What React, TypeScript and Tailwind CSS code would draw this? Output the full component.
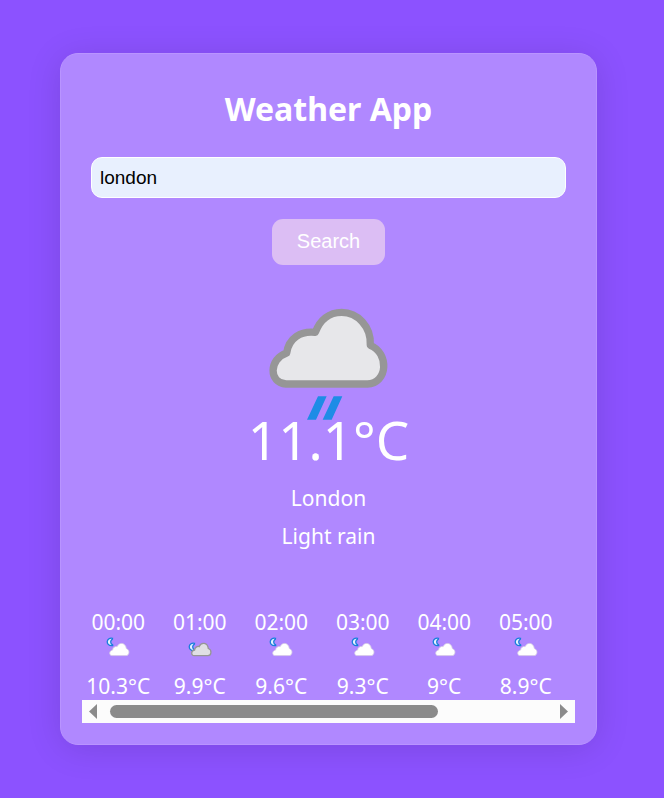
type Hour = { time: string; temp: string; sky: "partly" | "cloudy" };

const hours: Hour[] = [
  { time: "00:00", temp: "10.3°C", sky: "partly" },
  { time: "01:00", temp: "9.9°C", sky: "cloudy" },
  { time: "02:00", temp: "9.6°C", sky: "partly" },
  { time: "03:00", temp: "9.3°C", sky: "partly" },
  { time: "04:00", temp: "9°C", sky: "partly" },
  { time: "05:00", temp: "8.9°C", sky: "partly" },
];

const CLOUD =
  "M138 281 C86 278 86 206 140 188 C146 143 182 121 226 126 C240 88 268 66 305 66 C352 66 394 108 391 165 C448 188 444 279 382 281 Z";

function LightRainIcon() {
  return (
    <svg viewBox="84 50 366 342" className="h-[114px] w-[122px]" aria-hidden="true">
      <path d={CLOUD} fill="#e7e7ea" stroke="#969696" strokeWidth="22" strokeLinejoin="round" />
      <path d="M234 318 H260 L228 388 H201 Z M281 318 H307 L275 388 H248 Z" fill="#1e8ce6" />
    </svg>
  );
}

function NightIcon({ sky }: { sky: Hour["sky"] }) {
  const cloudy = sky === "cloudy";
  return (
    <svg viewBox="0 0 24 20" className="h-5 w-6" aria-hidden="true">
      <path
        d="M6.5 1.3 C0 0 -.8 8.8 5.8 8.7 C7 8.7 7.2 8 6 7.4 C4.2 6 4.2 3.5 6.4 2.1 Z"
        fill="#e4f1ff"
        stroke="#187edb"
        strokeWidth="1.3"
        transform={cloudy ? "translate(0 5)" : undefined}
      />
      <path
        d="M6.2 18.6 C2.8 18.6 2.8 13.7 6.6 13 C6.8 10.4 9.2 9 11.2 9.6 C13 4.8 19.6 5.3 20.3 11.5 C24.4 13 23.3 18.6 20 18.6 Z"
        fill={cloudy ? "#e0dfe4" : "#ffffff"}
        stroke={cloudy ? "#969696" : "#d5cbe5"}
        strokeWidth={cloudy ? 1.3 : 0.8}
      />
    </svg>
  );
}

export default function App() {
  return (
    <main className="min-h-screen bg-[#8c52ff] pt-[53px] pr-[67px] pb-[53px] pl-[60px] font-['Noto_Sans','Segoe_UI',sans-serif] text-white">
      <section className="rounded-[18px] border border-[#b994ff] bg-[#b088ff] px-[21px] pt-[30px] pb-[21px] shadow-[0_4px_35px_rgba(0,0,0,0.12)]">
        <h1 className="text-center text-[32px] leading-[50px] font-bold">Weather App</h1>

        <form className="mt-[23px] flex flex-col items-center px-[9px]" onSubmit={(e) => e.preventDefault()}>
          <input
            type="text"
            aria-label="City"
            defaultValue="london"
            className="h-[41px] w-full rounded-[11px] border border-white bg-[#e8f0fe] px-2 font-['Liberation_Sans',Arial,sans-serif] text-[19px] text-black outline-none"
          />
          <button
            type="submit"
            className="mt-[21px] h-[46px] w-[113px] rounded-[11px] bg-[#dcbef4] pb-[2px] font-['Liberation_Sans',Arial,sans-serif] text-[20px]"
          >
            Search
          </button>
        </form>

        <div className="mt-[42px] flex flex-col items-center">
          <LightRainIcon />
          <p className="-mt-[18px] text-[53px] leading-[74px]">11.1°C</p>
          <p className="mt-[2px] text-[21px] leading-[38px]">London</p>
          <p className="text-[21px] leading-[38px]">Light rain</p>
        </div>

        <ul className="mt-[52px] grid grid-cols-6 gap-[9px] pr-[13px]">
          {hours.map((hour) => (
            <li key={hour.time} className="flex flex-col items-center text-[21px] leading-[30px] whitespace-nowrap">
              <span>{hour.time}</span>
              <NightIcon sky={hour.sky} />
              <span className="mt-[15px] leading-[28px]">{hour.temp}</span>
            </li>
          ))}
        </ul>

        <div className="flex h-[23px] items-center bg-[#fcfcfc] px-[7px]">
          <button type="button" aria-label="Scroll left" className="h-[15px] w-2">
            <svg viewBox="0 0 8 15" className="h-[15px] w-2" fill="#8b8b8b">
              <path d="M8 0V15L0 7.5Z" />
            </svg>
          </button>
          <div className="mx-[13px] flex-1">
            <div className="h-[13px] w-3/4 rounded-full bg-[#8b8b8b]" />
          </div>
          <button type="button" aria-label="Scroll right" className="h-[15px] w-2">
            <svg viewBox="0 0 8 15" className="h-[15px] w-2" fill="#8b8b8b">
              <path d="M0 0V15L8 7.5Z" />
            </svg>
          </button>
        </div>
      </section>
    </main>
  );
}
